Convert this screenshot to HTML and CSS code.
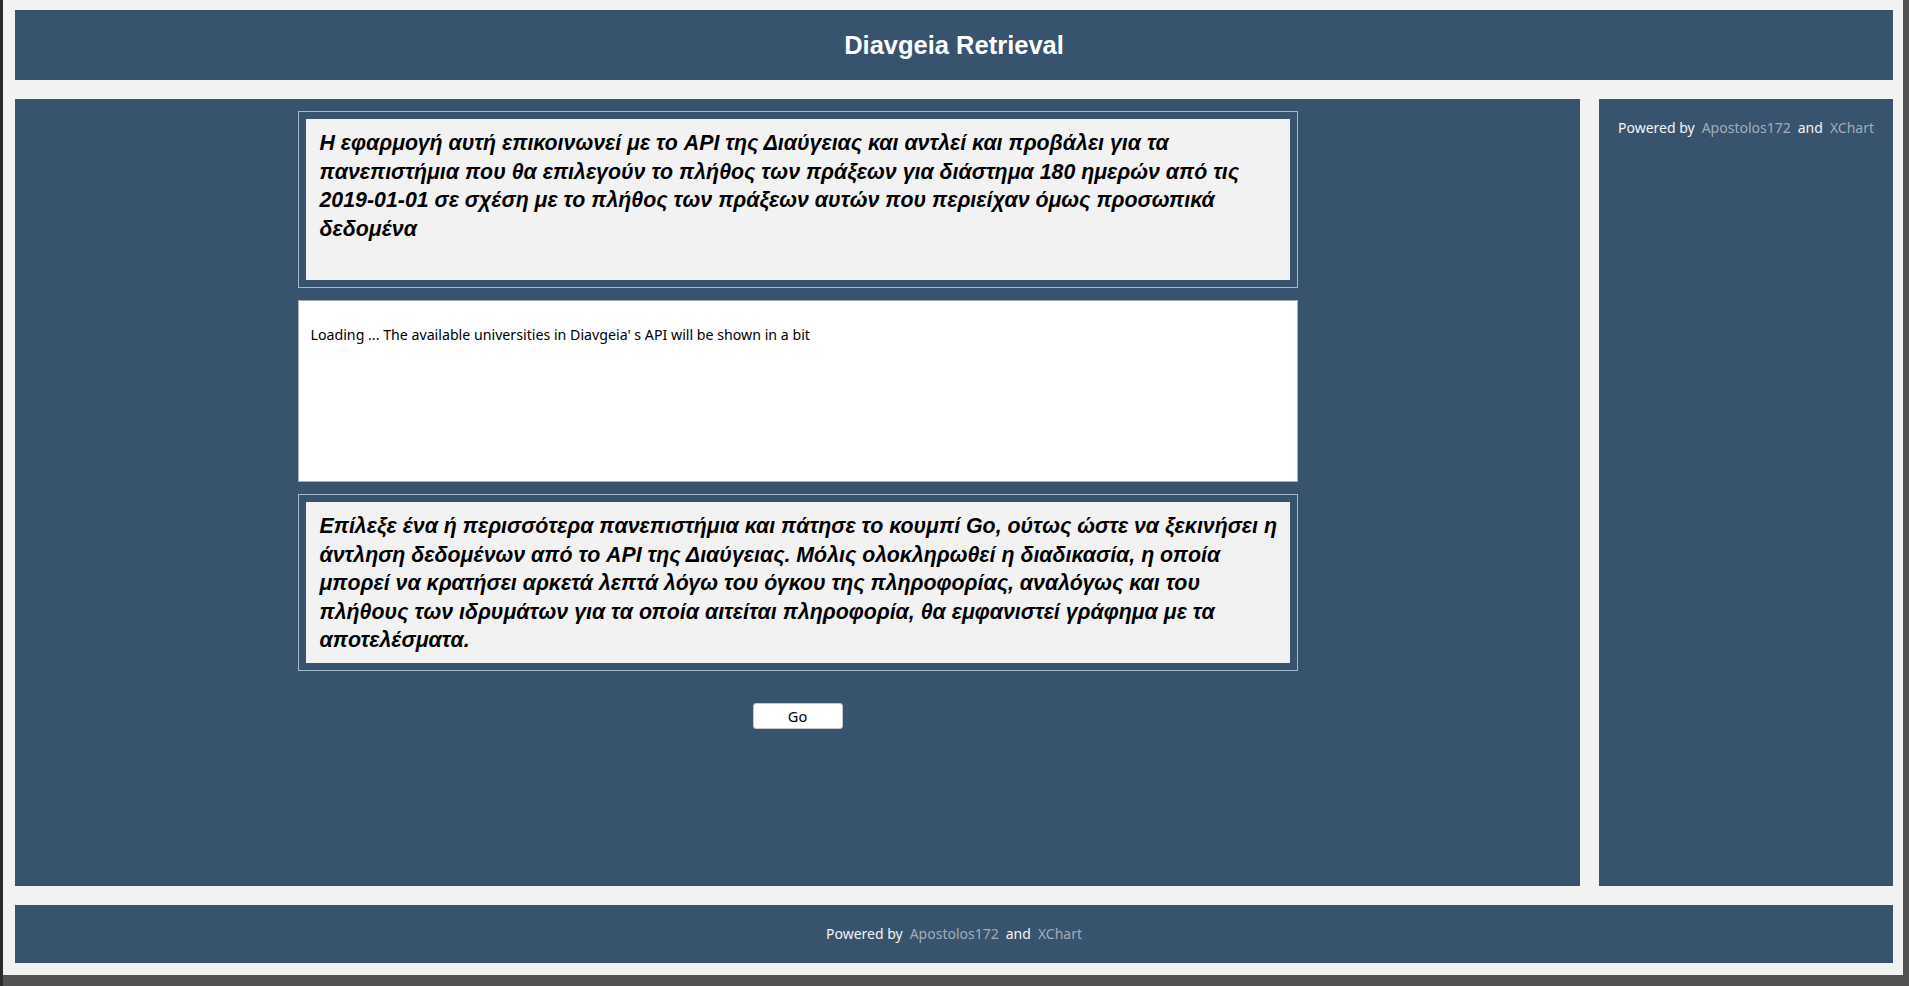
FILE: index.html
```html
<!DOCTYPE html>
<html lang="el">
<head>
<meta charset="utf-8">
<title>Diavgeia Retrieval</title>
<link rel="stylesheet" href="styles.css">
</head>
<body>
<div class="window">
  <header class="header">
    <h1 class="title">Diavgeia Retrieval</h1>
  </header>
  <div class="main">
    <section class="content">
      <div class="frame">
        <p class="note">Η εφαρμογή αυτή επικοινωνεί με το API της Διαύγειας και αντλεί και προβάλει για τα πανεπιστήμια που θα επιλεγούν το πλήθος των πράξεων για διάστημα 180 ημερών από τις 2019-01-01 σε σχέση με το πλήθος των πράξεων αυτών που περιείχαν όμως προσωπικά δεδομένα</p>
      </div>
      <div class="listbox">
        <div class="list-item">Loading ... The available universities in Diavgeia' s API will be shown in a bit</div>
      </div>
      <div class="frame">
        <p class="note">Επίλεξε ένα ή περισσότερα πανεπιστήμια και πάτησε το κουμπί Go, ούτως ώστε να ξεκινήσει η άντληση δεδομένων από το API της Διαύγειας. Μόλις ολοκληρωθεί η διαδικασία, η οποία μπορεί να κρατήσει αρκετά λεπτά λόγω του όγκου της πληροφορίας, αναλόγως και του πλήθους των ιδρυμάτων για τα οποία αιτείται πληροφορία, θα εμφανιστεί γράφημα με τα αποτελέσματα.</p>
      </div>
      <button class="go" type="button">Go</button>
    </section>
    <aside class="sidebar">
      <p class="credits"><span>Powered by</span><a class="link">Apostolos172</a><span>and</span><a class="link">XChart</a></p>
    </aside>
  </div>
  <footer class="footer">
    <p class="credits"><span>Powered by</span><a class="link">Apostolos172</a><span>and</span><a class="link">XChart</a></p>
  </footer>
</div>
</body>
</html>
```
FILE: styles.css
```css
html, body {
  margin: 0;
  padding: 0;
}
body {
  background: #505352;
  width: 1909px;
  height: 986px;
  overflow: hidden;
  border-left: 3px solid #2a2c2c;
  box-sizing: border-box;
}
.window {
  width: 1900px;
  height: 975px;
  background: #f2f2f2;
  box-sizing: border-box;
  padding: 10px 10px 12px 12px;
  display: flex;
  flex-direction: column;
  gap: 19px;
}
.header {
  height: 70px;
  flex: none;
  background: #38536e;
  display: flex;
  align-items: center;
  justify-content: center;
}
.title {
  margin: 0;
  color: #ffffff;
  font-family: "Liberation Sans", Arial, sans-serif;
  font-weight: bold;
  font-size: 25.5px;
}
.main {
  flex: 1;
  display: flex;
  gap: 19px;
  min-height: 0;
}
.content {
  flex: 1;
  background: #38536e;
  display: flex;
  flex-direction: column;
  align-items: center;
  padding-top: 12px;
}
.frame {
  width: 1000px;
  box-sizing: border-box;
  border: 1px solid #a4b8cf;
  padding: 7px;
}
.note {
  margin: 0;
  height: 161px;
  box-sizing: border-box;
  background: #f2f2f2;
  padding: 10px 2px 0 14px;
  font-family: "Liberation Sans", Arial, sans-serif;
  font-weight: bold;
  font-style: italic;
  font-size: 21.33px;
  line-height: 28.5px;
  color: #000000;
}
.listbox {
  width: 1000px;
  height: 182px;
  box-sizing: border-box;
  margin: 12px 0;
  background: #ffffff;
  border: 1px solid #abadb3;
  padding: 24px 12px 0;
}
.list-item {
  font-family: "Noto Sans", "Open Sans", sans-serif;
  font-size: 14.2px;
  line-height: 20px;
  color: #000000;
}
.go {
  margin-top: 32px;
  width: 90px;
  height: 26px;
  background: #ffffff;
  border: 1px solid #c8c8c8;
  border-radius: 3px;
  font-family: "Noto Sans", "Open Sans", sans-serif;
  font-size: 14.5px;
  color: #000000;
  padding: 0;
}
.sidebar {
  width: 294px;
  flex: none;
  background: #38536e;
  padding-top: 19px;
  box-sizing: border-box;
}
.credits {
  margin: 0;
  display: flex;
  justify-content: center;
  gap: 7px;
  font-family: "Noto Sans", "Open Sans", sans-serif;
  font-size: 14px;
  line-height: 20px;
  color: #f4f4f4;
}
.link {
  color: #a3adb8;
}
.footer {
  height: 58px;
  flex: none;
  background: #38536e;
  display: flex;
  align-items: center;
  justify-content: center;
}
```
